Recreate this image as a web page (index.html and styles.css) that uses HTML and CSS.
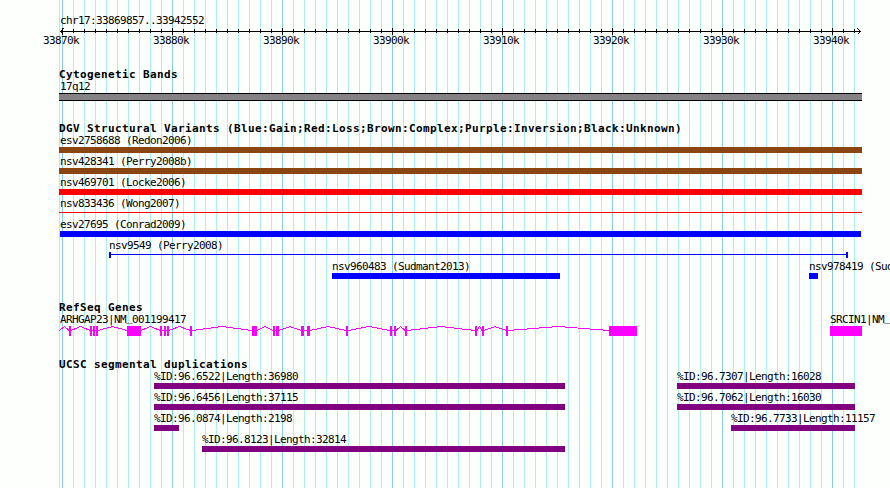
FILE: index.html
```html
<!DOCTYPE html>
<html lang="en">
<head>
    <meta charset="UTF-8">
    <title>chr17:33869857..33942552</title>
    <link rel="stylesheet" href="styles.css">
</head>
<body>
    <div class="browser">
        <div class="ruler">
            <div class="label">chr17:33869857..33942552</div>
            <svg class="axis" width="803" height="8" viewBox="59 0 803 8" shape-rendering="crispEdges">
                <defs>
                    <pattern id="minor" x="62" y="0" width="11" height="8" patternUnits="userSpaceOnUse">
                        <rect x="0" y="1" width="1" height="4"/>
                    </pattern>
                    <pattern id="major" x="62" y="0" width="110" height="8" patternUnits="userSpaceOnUse">
                        <rect x="0" y="0" width="1" height="7"/>
                    </pattern>
                </defs>
                <rect x="60" y="3" width="801" height="1"/>
                <rect x="62" y="0" width="793" height="8" fill="url(#minor)"/>
                <rect x="62" y="0" width="793" height="8" fill="url(#major)"/>
                <path d="M63.5 0.5L60.5 3.5L63.5 6.5M857.5 0.5L860.5 3.5L857.5 6.5" fill="none" stroke="#000"/>
            </svg>
            <div class="ticks">
                <span>33870k</span><span>33880k</span><span>33890k</span><span>33900k</span>
                <span>33910k</span><span>33920k</span><span>33930k</span><span>33940k</span>
            </div>
        </div>

        <section class="track cytobands">
            <h2>Cytogenetic Bands</h2>
            <div class="row">
                <div class="feature edge"><div class="label">17q12</div><div class="band"></div></div>
            </div>
        </section>

        <section class="track">
            <h2>DGV Structural Variants (Blue:Gain;Red:Loss;Brown:Complex;Purple:Inversion;Black:Unknown)</h2>
            <div class="row">
                <div class="feature edge"><div class="label">esv2758688 (Redon2006)</div><div class="bar complex"></div></div>
            </div>
            <div class="row">
                <div class="feature edge"><div class="label">nsv428341 (Perry2008b)</div><div class="bar complex"></div></div>
            </div>
            <div class="row">
                <div class="feature edge"><div class="label">nsv469701 (Locke2006)</div><div class="bar loss"></div></div>
            </div>
            <div class="row">
                <div class="feature edge"><div class="label">nsv833436 (Wong2007)</div><div class="bar thin loss"></div></div>
            </div>
            <div class="row">
                <div class="feature" style="--x: 1px; --w: 801px"><div class="label">esv27695 (Conrad2009)</div><div class="bar gain"></div></div>
            </div>
            <div class="row">
                <div class="feature" style="--x: 50px; --w: 739px"><div class="label">nsv9549 (Perry2008)</div><div class="span"><div class="bar thin gain"></div></div></div>
            </div>
            <div class="row">
                <div class="feature" style="--x: 273px; --w: 228px"><div class="label">nsv960483 (Sudmant2013)</div><div class="bar gain"></div></div>
                <div class="feature" style="--x: 750px; --w: 9px"><div class="label">nsv978419 (Sud</div><div class="bar gain"></div></div>
            </div>
        </section>

        <section class="track">
            <h2>RefSeq Genes</h2>
            <div class="row">
                <div class="feature edge">
                    <div class="label">ARHGAP23|NM<span class="underscore">_</span>001199417</div>
                    <svg class="gene" width="803" height="10" viewBox="59 0 803 10" shape-rendering="crispEdges">
                        <path class="intron" d="M59 4.5L64.5 .5L69 4.5M71 4.5L80.5 .5L90 4.5M92 4.5H96M98 4.5L112.5 .5L127 4.5M141 4.5L150.5 .5L160 4.5M162 4.5H167M169 4.5L179.5 .5L190 4.5M192 4.5L222 .5L252 4.5M257 4.5L265 .5L273 4.5M275 4.5H276M279 4.5L290 .5L301 4.5M304 4.5H307M310 4.5L328 .5L346 4.5M348 4.5L369 .5L390 4.5M392 4.5H394M396 4.5L400.5 .5L405 4.5M407 4.5L441 .5L475 4.5M477 4.5L479.5 .5L482 4.5M484 4.5L495 .5L506 4.5M508 4.5L558.5 .5L609 4.5"/>
                        <path class="exon" d="M69 0h2v10h-2zM90 0h2v10h-2zM93 0h2v10h-2zM96 0h2v10h-2zM127 0h14v10h-14zM160 0h2v10h-2zM164 0h2v10h-2zM167 0h2v10h-2zM190 0h2v10h-2zM252 0h5v10h-5zM273 0h2v10h-2zM276 0h3v10h-3zM301 0h3v10h-3zM307 0h3v10h-3zM346 0h2v10h-2zM390 0h2v10h-2zM394 0h2v10h-2zM405 0h2v10h-2zM475 0h2v10h-2zM482 0h2v10h-2zM506 0h2v10h-2zM609 0h28v10h-28z"/>
                    </svg>
                </div>
                <div class="feature" style="--x: 771px; --w: 32px"><div class="label">SRCIN1|NM<span class="underscore">_</span></div><div class="bar exon-block"></div></div>
            </div>
        </section>

        <section class="track">
            <h2>UCSC segmental duplications</h2>
            <div class="row">
                <div class="feature" style="--x: 95px; --w: 411px"><div class="label">%ID:96.6522|Length:36980</div><div class="bar segdup"></div></div>
                <div class="feature" style="--x: 618px; --w: 178px"><div class="label">%ID:96.7307|Length:16028</div><div class="bar segdup"></div></div>
            </div>
            <div class="row">
                <div class="feature" style="--x: 95px; --w: 411px"><div class="label">%ID:96.6456|Length:37115</div><div class="bar segdup"></div></div>
                <div class="feature" style="--x: 618px; --w: 178px"><div class="label">%ID:96.7062|Length:16030</div><div class="bar segdup"></div></div>
            </div>
            <div class="row">
                <div class="feature" style="--x: 95px; --w: 25px"><div class="label">%ID:96.0874|Length:2198</div><div class="bar segdup"></div></div>
                <div class="feature" style="--x: 672px; --w: 124px"><div class="label">%ID:96.7733|Length:11157</div><div class="bar segdup"></div></div>
            </div>
            <div class="row">
                <div class="feature" style="--x: 143px; --w: 363px"><div class="label">%ID:96.8123|Length:32814</div><div class="bar segdup"></div></div>
            </div>
        </section>
    </div>
</body>
</html>
```
FILE: styles.css
```css
* {
    box-sizing: border-box;
}

body {
    margin: 0;
    background-color: #fdfffc;
    color: #000;
    font-family: "DejaVu Sans Mono", monospace;
}

/* grid lines: one every 1k, a darker one every 10k, one at the left edge */
.browser {
    width: 890px;
    height: 488px;
    overflow: hidden;
    padding: 15px 28px 0 59px;
    background-image:
        repeating-linear-gradient(to right, #87ceeb 0 1px, transparent 1px 110px),
        repeating-linear-gradient(to right, #afeeee 0 1px, transparent 1px 11px),
        linear-gradient(#afeeee, #afeeee);
    background-position: 62px 0, 62px 0, 59px 0;
    background-size: 793px 100%, 793px 100%, 1px 100%;
    background-repeat: no-repeat;
}

.label,
.ticks {
    font-size: 11px;
    line-height: 12px;
    height: 12px;
    letter-spacing: -0.622px;
    white-space: nowrap;
}

/* keep the underscore clear of the glyph below */
.underscore {
    line-height: 0;
    vertical-align: 2px;
}

.ruler {
    height: 53px;
}

.ruler .label {
    padding-left: 1px;
}

.axis {
    display: block;
    margin-top: 1px;
}

.ticks {
    display: flex;
    margin: -1px 0 0 -16px;
}

.ticks span {
    flex: 0 0 110px;
}

.track {
    margin-bottom: 19px;
    padding-bottom: 3px;
}

h2 {
    margin: 0;
    height: 13px;
    font-size: 11px;
    line-height: 13px;
    font-weight: bold;
    letter-spacing: 0.378px;
    white-space: nowrap;
}

.row {
    display: grid;
    grid-template-columns: 803px;
    margin-bottom: 3px;
}

.row:last-child {
    margin-bottom: 0;
}

.cytobands {
    padding-bottom: 2px;
}

.feature {
    grid-area: 1 / 1;
    width: var(--w);
    margin-left: var(--x);
}

.feature.edge {
    width: 803px;
    margin-left: 0;
}

.edge .label {
    padding-left: 1px;
}

.band {
    height: 8px;
    border: solid #000;
    border-width: 1px 0;
    background-color: #848284;
}

.bar {
    height: 6px;
}

.gain {
    background-color: #0000ff;
}

.loss {
    background-color: #ff0000;
}

.complex {
    background-color: #8b4513;
}

.segdup {
    background-color: #800080;
}

/* 1px line centred in the 6px glyph height */
.thin {
    height: 1px;
    margin: 2px 0 3px;
}

.span {
    display: flow-root;
    height: 6px;
    border: solid #0000ff;
    border-width: 0 2px;
}

.gene {
    display: block;
}

.intron {
    fill: none;
    stroke: #ff00ff;
}

.exon {
    fill: #ff00ff;
}

.exon-block {
    height: 10px;
    background-color: #ff00ff;
}
```
